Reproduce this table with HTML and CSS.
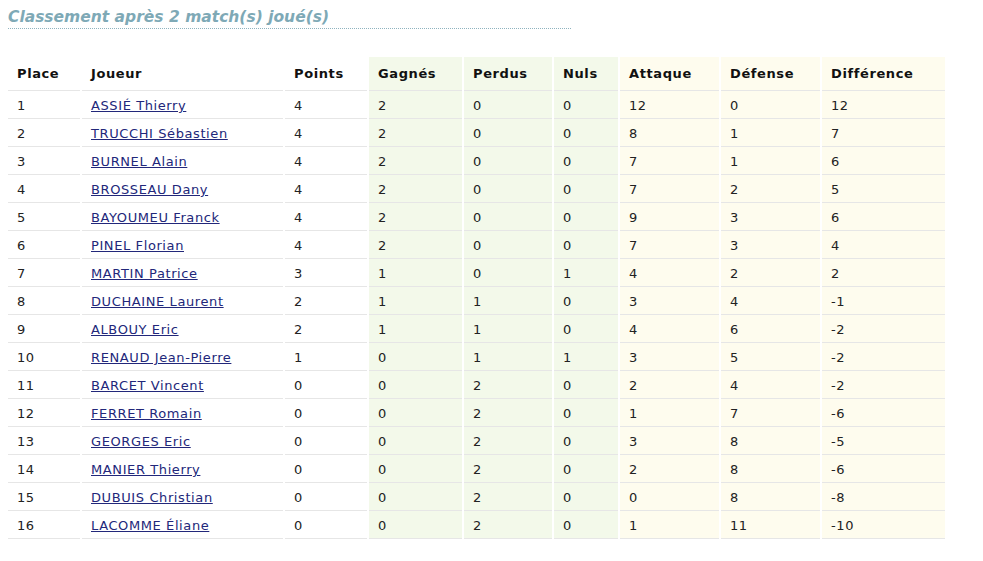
FILE: index.html
```html
<!DOCTYPE html>
<html lang="fr">
<head>
<meta charset="utf-8">
<title>Classement</title>
<link rel="stylesheet" href="styles.css">
</head>
<body>
<h2 class="title">Classement après 2 match(s) joué(s)</h2>
<table class="ranking">
  <colgroup>
    <col class="c-place"><col class="c-joueur"><col class="c-points"><col class="c-gagnes"><col class="c-perdus"><col class="c-nuls"><col class="c-att"><col class="c-def"><col class="c-diff">
  </colgroup>
  <thead>
    <tr><th>Place</th><th>Joueur</th><th>Points</th><th class="g">Gagnés</th><th class="g">Perdus</th><th class="g">Nuls</th><th class="y">Attaque</th><th class="y">Défense</th><th class="y">Différence</th></tr>
  </thead>
  <tbody>
    <tr><td>1</td><td><a href="#">ASSIÉ Thierry</a></td><td>4</td><td class="g">2</td><td class="g">0</td><td class="g">0</td><td class="y">12</td><td class="y">0</td><td class="y">12</td></tr>
    <tr><td>2</td><td><a href="#">TRUCCHI Sébastien</a></td><td>4</td><td class="g">2</td><td class="g">0</td><td class="g">0</td><td class="y">8</td><td class="y">1</td><td class="y">7</td></tr>
    <tr><td>3</td><td><a href="#">BURNEL Alain</a></td><td>4</td><td class="g">2</td><td class="g">0</td><td class="g">0</td><td class="y">7</td><td class="y">1</td><td class="y">6</td></tr>
    <tr><td>4</td><td><a href="#">BROSSEAU Dany</a></td><td>4</td><td class="g">2</td><td class="g">0</td><td class="g">0</td><td class="y">7</td><td class="y">2</td><td class="y">5</td></tr>
    <tr><td>5</td><td><a href="#">BAYOUMEU Franck</a></td><td>4</td><td class="g">2</td><td class="g">0</td><td class="g">0</td><td class="y">9</td><td class="y">3</td><td class="y">6</td></tr>
    <tr><td>6</td><td><a href="#">PINEL Florian</a></td><td>4</td><td class="g">2</td><td class="g">0</td><td class="g">0</td><td class="y">7</td><td class="y">3</td><td class="y">4</td></tr>
    <tr><td>7</td><td><a href="#">MARTIN Patrice</a></td><td>3</td><td class="g">1</td><td class="g">0</td><td class="g">1</td><td class="y">4</td><td class="y">2</td><td class="y">2</td></tr>
    <tr><td>8</td><td><a href="#">DUCHAINE Laurent</a></td><td>2</td><td class="g">1</td><td class="g">1</td><td class="g">0</td><td class="y">3</td><td class="y">4</td><td class="y">-1</td></tr>
    <tr><td>9</td><td><a href="#">ALBOUY Eric</a></td><td>2</td><td class="g">1</td><td class="g">1</td><td class="g">0</td><td class="y">4</td><td class="y">6</td><td class="y">-2</td></tr>
    <tr><td>10</td><td><a href="#">RENAUD Jean-Pierre</a></td><td>1</td><td class="g">0</td><td class="g">1</td><td class="g">1</td><td class="y">3</td><td class="y">5</td><td class="y">-2</td></tr>
    <tr><td>11</td><td><a href="#">BARCET Vincent</a></td><td>0</td><td class="g">0</td><td class="g">2</td><td class="g">0</td><td class="y">2</td><td class="y">4</td><td class="y">-2</td></tr>
    <tr><td>12</td><td><a href="#">FERRET Romain</a></td><td>0</td><td class="g">0</td><td class="g">2</td><td class="g">0</td><td class="y">1</td><td class="y">7</td><td class="y">-6</td></tr>
    <tr><td>13</td><td><a href="#">GEORGES Eric</a></td><td>0</td><td class="g">0</td><td class="g">2</td><td class="g">0</td><td class="y">3</td><td class="y">8</td><td class="y">-5</td></tr>
    <tr><td>14</td><td><a href="#">MANIER Thierry</a></td><td>0</td><td class="g">0</td><td class="g">2</td><td class="g">0</td><td class="y">2</td><td class="y">8</td><td class="y">-6</td></tr>
    <tr><td>15</td><td><a href="#">DUBUIS Christian</a></td><td>0</td><td class="g">0</td><td class="g">2</td><td class="g">0</td><td class="y">0</td><td class="y">8</td><td class="y">-8</td></tr>
    <tr><td>16</td><td><a href="#">LACOMME Éliane</a></td><td>0</td><td class="g">0</td><td class="g">2</td><td class="g">0</td><td class="y">1</td><td class="y">11</td><td class="y">-10</td></tr>
  </tbody>
</table>
</body>
</html>
```
FILE: styles.css
```css
html, body {
  background: #ffffff;
}
body {
  margin: 8px;
  font-family: "DejaVu Sans", Verdana, sans-serif;
  font-size: 13px;
  letter-spacing: 0.6px;
  color: #222222;
}
.title {
  margin: 0;
  width: 563px;
  font-size: 15.5px;
  letter-spacing: 0;
  font-weight: bold;
  font-style: italic;
  color: #7ea9b6;
  line-height: 18px;
  padding-bottom: 2px;
  border-bottom: 1px dotted #8fb3bf;
}
.ranking {
  margin: 28px 0 0 -2px;
  border-collapse: separate;
  border-spacing: 2px 0;
  table-layout: fixed;
  width: 941px;
}
.c-place { width: 72px; }
.c-joueur { width: 201px; }
.c-points { width: 82px; }
.c-gagnes { width: 93px; }
.c-perdus { width: 88px; }
.c-nuls { width: 64px; }
.c-att { width: 99px; }
.c-def { width: 99px; }
.c-diff { width: 123px; }
.ranking th {
  text-align: left;
  font-weight: bold;
  color: #111111;
  height: 33px;
  padding: 0 0 0 9px;
  vertical-align: middle;
  border-bottom: 1px solid #e6e6e6;
}
.ranking td {
  height: 25px;
  padding: 2px 0 0 9px;
  vertical-align: middle;
  border-bottom: 1px solid #e6e6e6;
  white-space: nowrap;
}
.ranking .g { background: #f3f9ea; }
.ranking .y { background: #fefcee; }
.ranking a {
  color: #22277a;
  text-decoration: underline;
}
```
